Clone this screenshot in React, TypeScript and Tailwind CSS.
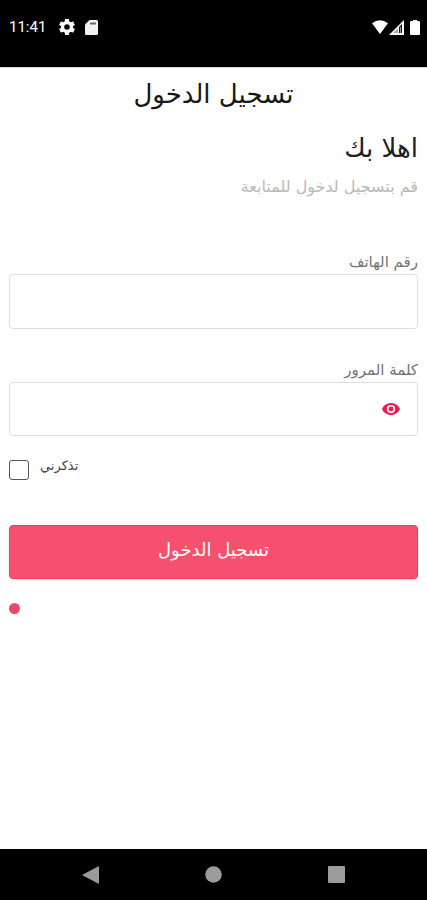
import { useState } from 'react';

function StatusBar() {
  return (
    <header dir="ltr" className="flex h-[67px] shrink-0 items-start justify-between bg-black pt-[18px] pr-[7px] pl-[9px] text-white">
      <div className="flex h-[18px] items-center">
        <span className="w-[37px] font-[Roboto,sans-serif] text-[15px] leading-5 whitespace-nowrap">11:41</span>
        <svg className="ml-[13px] size-4" viewBox="2 2 20 20" fill="currentColor" aria-hidden="true">
          <path fillRule="evenodd" d="M19.43 12.98c.04-.32.07-.64.07-.98s-.03-.66-.07-.98l2.11-1.65c.19-.15.24-.42.12-.64l-2-3.46c-.12-.22-.39-.3-.61-.22l-2.49 1c-.52-.4-1.08-.73-1.69-.98l-.38-2.65A.49.49 0 0 0 14 2h-4c-.25 0-.46.18-.49.42l-.38 2.65c-.61.25-1.17.59-1.69.98l-2.49-1c-.23-.09-.49 0-.61.22l-2 3.46c-.13.22-.07.49.12.64l2.11 1.65c-.04.32-.07.65-.07.98s.03.66.07.98l-2.11 1.65c-.19.15-.24.42-.12.64l2 3.46c.12.22.39.3.61.22l2.49-1c.52.4 1.08.73 1.69.98l.38 2.65c.03.24.24.42.49.42h4c.25 0 .46-.18.49-.42l.38-2.65c.61-.25 1.17-.59 1.69-.98l2.49 1c.23.09.49 0 .61-.22l2-3.46c.12-.22.07-.49-.12-.64zM12 15.500a3.500 3.500 0 1 1 0-7 3.500 3.500 0 0 1 0 7z" />
        </svg>
        <svg className="ml-[10px] h-[15px] w-[13px]" viewBox="0 0 13 15" aria-hidden="true">
          <path d="M4.500 0H11.500Q13 0 13 1.500V13.500Q13 15 11.500 15H1.500Q0 15 0 13.500V4.500Z" fill="#f2f2f2" />
          <path d="M5 2.500H11V4.500H5Z" fill="#666" />
        </svg>
      </div>
      <div className="flex h-[18px] items-center">
        <svg className="h-[14px] w-4" viewBox="0 0 17 15" preserveAspectRatio="none" fill="currentColor" aria-hidden="true">
          <path d="M0 3.500Q8.500 -3 17 3.500L8.500 15Z" />
        </svg>
        <svg className="ml-px h-[15px] w-[15px]" viewBox="0 0 15 15" aria-hidden="true">
          <path d="M0 15L15 0V15Z" fill="#fff" />
          <path d="M10 7L13 4V13H10Z" fill="#111" />
          <path d="M11 7H12V13H11Z" fill="#999" />
          <path d="M4 13L9 8V13Z" fill="#aaa" />
        </svg>
        <svg className="ml-[6px] h-[15px] w-[10px]" viewBox="0 0 10 15" fill="currentColor" aria-hidden="true">
          <path d="M3 0H7V1H9Q10 1 10 2V14Q10 15 9 15H1Q0 15 0 14V2Q0 1 1 1H3Z" />
        </svg>
      </div>
    </header>
  );
}

function NavigationBar() {
  return (
    <nav dir="ltr" className="flex h-[51px] shrink-0 items-center justify-center gap-[106px] bg-black">
      <button type="button" aria-label="رجوع">
        <svg className="h-[18px] w-[17px]" viewBox="0 0 17 18" fill="#9b9b9b"><path d="M0 9L16 0.500Q17 0 17 1V17Q17 18 16 17.500Z" /></svg>
      </button>
      <button type="button" aria-label="الرئيسية">
        <svg className="size-[17px]" viewBox="0 0 17 17" fill="#9b9b9b"><circle cx="8.5" cy="8.5" r="8.3" /></svg>
      </button>
      <button type="button" aria-label="التطبيقات">
        <svg className="size-[17px]" viewBox="0 0 17 17" fill="#9b9b9b"><rect width="17" height="17" rx="1" /></svg>
      </button>
    </nav>
  );
}

export default function App() {
  const [visible, setVisible] = useState(false);
  return (
    <div dir="rtl" lang="ar" className="flex min-h-screen flex-col bg-white font-['DejaVu_Sans',sans-serif]">
      <StatusBar />
      <main className="flex grow flex-col border-t border-[#ddd] px-[9px] pt-2">
        <h1 className="text-center text-[26px] leading-9 text-[#171717]">تسجيل الدخول</h1>
        <h2 className="mt-[18px] text-[26px] leading-9 text-[#202020]">اهلا بك</h2>
        <p className="mt-[11px] text-base leading-5 text-[#b9b9b9]">قم بتسجيل لدخول للمتابعة</p>
        <form className="mt-[53px] flex flex-col" onSubmit={(event) => event.preventDefault()}>
          <label htmlFor="phone" className="text-[15px] leading-6 text-[#747474]">رقم الهاتف</label>
          <input id="phone" type="tel" className="h-[55px] w-full rounded-[4px] border border-[#dedee1] px-4 outline-none" />
          <label htmlFor="password" className="mt-[29px] text-[15px] leading-6 text-[#747474]">كلمة المرور</label>
          <div className="flex h-[54px] items-center rounded-[4px] border border-[#dedee1] pr-[17px]">
            <button type="button" className="flex" aria-label="إظهار كلمة المرور" onClick={() => setVisible(!visible)}>
              <svg className="h-3 w-[18px]" viewBox="1 4.500 22 15" preserveAspectRatio="none" fill="#e91e55">
                <path d="M12 4.500C7 4.500 2.730 7.610 1 12c1.730 4.390 6 7.500 11 7.500s9.270-3.110 11-7.500c-1.730-4.390-6-7.500-11-7.500zM12 17a5 5 0 1 1 0-10 5 5 0 0 1 0 10zm0-8a3 3 0 1 0 0 6 3 3 0 0 0 0-6z" />
              </svg>
            </button>
            <input id="password" type={visible ? 'text' : 'password'} className="h-full min-w-0 grow px-4 outline-none" />
          </div>
          <div dir="ltr" className="mt-5 flex items-end gap-[11px]">
            <input id="remember" type="checkbox" className="size-5 appearance-none rounded-[3px] border border-[#555] bg-white checked:bg-[#f6506f]" />
            <label htmlFor="remember" className="pb-1 text-[13px] leading-5 text-[#444]">تذكرني</label>
          </div>
          <button type="submit" className="mt-[45px] h-[54px] rounded-[4px] border border-[#ed3e61] bg-[#f6506f] pb-1 text-lg leading-6 text-white shadow-sm">تسجيل الدخول</button>
        </form>
        <span className="mt-6 size-[11px] self-end rounded-full bg-[#ef476a]" />
      </main>
      <NavigationBar />
    </div>
  );
}
